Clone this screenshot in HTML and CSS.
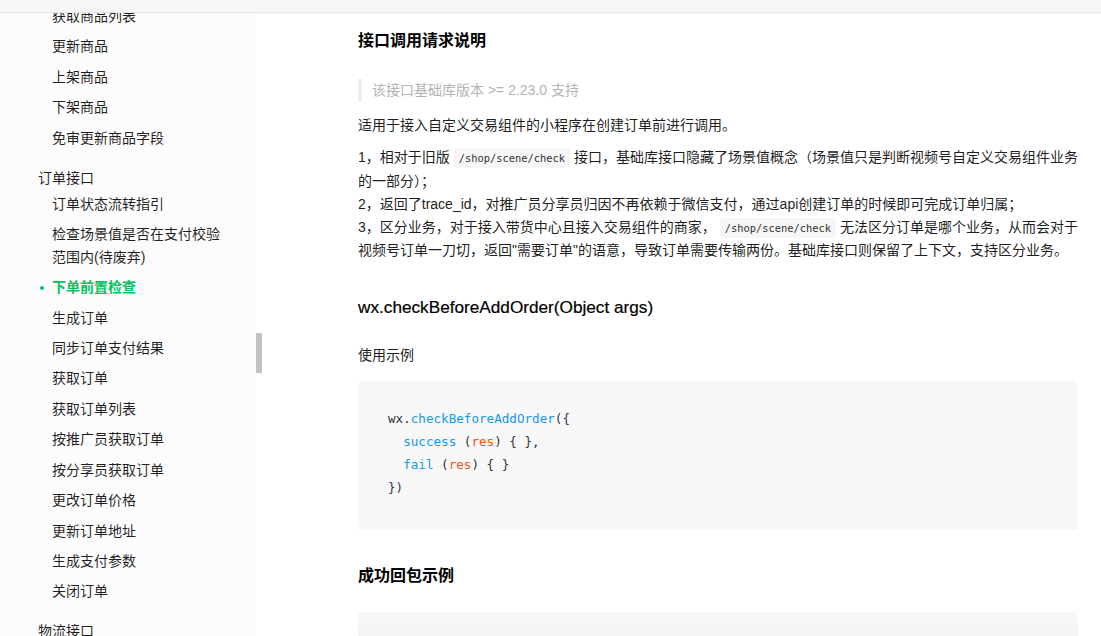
FILE: index.html
```html
<!DOCTYPE html>
<html lang="zh-CN">
<head>
<meta charset="utf-8">
<title>下单前置检查</title>
<link rel="stylesheet" href="styles.css">
</head>
<body>
<div class="topbar"></div>
<div class="layout">
  <aside class="sidebar">
    <ul class="nav">
      <li class="item">获取商品列表</li>
      <li class="item">更新商品</li>
      <li class="item">上架商品</li>
      <li class="item">下架商品</li>
      <li class="item">免审更新商品字段</li>
      <li class="group">订单接口</li>
      <li class="item">订单状态流转指引</li>
      <li class="item">检查场景值是否在支付校验<br>范围内(待废弃)</li>
      <li class="item active">下单前置检查</li>
      <li class="item">生成订单</li>
      <li class="item">同步订单支付结果</li>
      <li class="item">获取订单</li>
      <li class="item">获取订单列表</li>
      <li class="item">按推广员获取订单</li>
      <li class="item">按分享员获取订单</li>
      <li class="item">更改订单价格</li>
      <li class="item">更新订单地址</li>
      <li class="item">生成支付参数</li>
      <li class="item">关闭订单</li>
      <li class="group">物流接口</li>
    </ul>
    <div class="thumb"></div>
  </aside>
  <main class="content">
    <h2 class="h2">接口调用请求说明</h2>
    <blockquote class="note">该接口基础库版本 &gt;= 2.23.0 支持</blockquote>
    <p class="p p-first">适用于接入自定义交易组件的小程序在创建订单前进行调用。</p>
    <p class="p p-list">1，相对于旧版 <code class="ic">/shop/scene/check</code> 接口，基础库接口隐藏了场景值概念（场景值只是判断视频号自定义交易组件业务的一部分）；<br>2，返回了trace_id，对推广员分享员归因不再依赖于微信支付，通过api创建订单的时候即可完成订单归属；<br>3，区分业务，对于接入带货中心且接入交易组件的商家， <code class="ic">/shop/scene/check</code> 无法区分订单是哪个业务，从而会对于视频号订单一刀切，返回"需要订单"的语意，导致订单需要传输两份。基础库接口则保留了上下文，支持区分业务。</p>
    <h3 class="h3">wx.checkBeforeAddOrder(Object args)</h3>
    <p class="p p-label">使用示例</p>
    <pre class="code"><code class="code-text">wx.<span class="fn">checkBeforeAddOrder</span>({
  <span class="fn">success</span> (<span class="arg">res</span>) { },
  <span class="fn">fail</span> (<span class="arg">res</span>) { }
})</code></pre>
    <h2 class="h2 h2-next">成功回包示例</h2>
    <div class="code code-next"></div>
  </main>
</div>
</body>
</html>
```

FILE: styles.css
```css
* { box-sizing: border-box; }
html, body {
  margin: 0;
  padding: 0;
  height: 100%;
  overflow: hidden;
  background: #fff;
}
body {
  font-family: "Liberation Sans", "Noto Sans CJK SC", sans-serif;
  color: rgba(0, 0, 0, 0.9);
  font-size: 14px;
}
.topbar {
  position: fixed;
  top: 0;
  left: 0;
  right: 0;
  height: 13px;
  background: #f6f6f6;
  border-bottom: 1px solid #e6e6e6;
  z-index: 10;
}
.layout {
  display: flex;
  height: 100%;
}
.sidebar {
  position: relative;
  width: 256px;
  flex: none;
  background: #fcfcfc;
  padding-top: 1px;
}
.nav {
  list-style: none;
  margin: 0;
  padding: 0;
}
.item {
  padding: 4px 0 4px 52px;
  line-height: 22.4px;
  font-size: 14px;
  color: rgba(0, 0, 0, 0.88);
  position: relative;
}
.item.active {
  color: #07c160;
  font-weight: 600;
}
.item.active::before {
  content: "";
  position: absolute;
  left: 40px;
  top: 13.5px;
  width: 4px;
  height: 4px;
  border-radius: 50%;
  background: #07c160;
}
.group {
  margin-top: 13.6px;
  padding-left: 38px;
  line-height: 22.4px;
  font-size: 14px;
  color: rgba(0, 0, 0, 0.88);
}
.thumb {
  position: absolute;
  left: 256px;
  top: 333px;
  width: 6px;
  height: 40px;
  background: #c1c1c1;
}
.content {
  flex: 1;
  padding: 29px 23px 0 102px;
  min-width: 0;
}
.h2 {
  margin: 0;
  font-size: 16px;
  line-height: 24px;
  font-weight: 700;
  color: #000;
}
.h2-next {
  margin-top: 34px;
}
.note {
  margin: 26px 0 0;
  padding: 0 0 0 10px;
  border-left: 4px solid #ededed;
  line-height: 22px;
  color: #b3b3b3;
  font-size: 14px;
}
.p {
  margin: 0;
  line-height: 23.3px;
  font-size: 14px;
}
.p-first { margin-top: 13px; }
.p-list { margin-top: 9px; }
.p-label { margin-top: 24.5px; }
.ic {
  font-family: "DejaVu Sans Mono", "Liberation Mono", monospace;
  font-size: 10.4px;
  line-height: 14px;
  background: #f6f6f6;
  padding: 4px 5px;
  border-radius: 2px;
  color: #333;
}
.h3 {
  margin: 31px 0 0;
  font-size: 17.2px;
  line-height: 26px;
  font-weight: 400;
  color: #000;
  -webkit-text-stroke: 0.2px #000;
}
.code {
  margin: 13.3px 0 0;
  background: #f8f8f8;
  border-radius: 4px;
  padding: 27.6px 30px 30.6px;
  font-family: "DejaVu Sans Mono", "Liberation Mono", monospace;
  font-size: 12.6px;
  line-height: 22.7px;
  color: #333;
  height: 149px;
}
.code-text {
  font: inherit;
}
.code-next {
  margin-top: 24px;
  height: 60px;
  background: linear-gradient(#f8f8f8, #ededed);
}
.fn { color: #1598ea; }
.arg { color: #f5520f; }
```
